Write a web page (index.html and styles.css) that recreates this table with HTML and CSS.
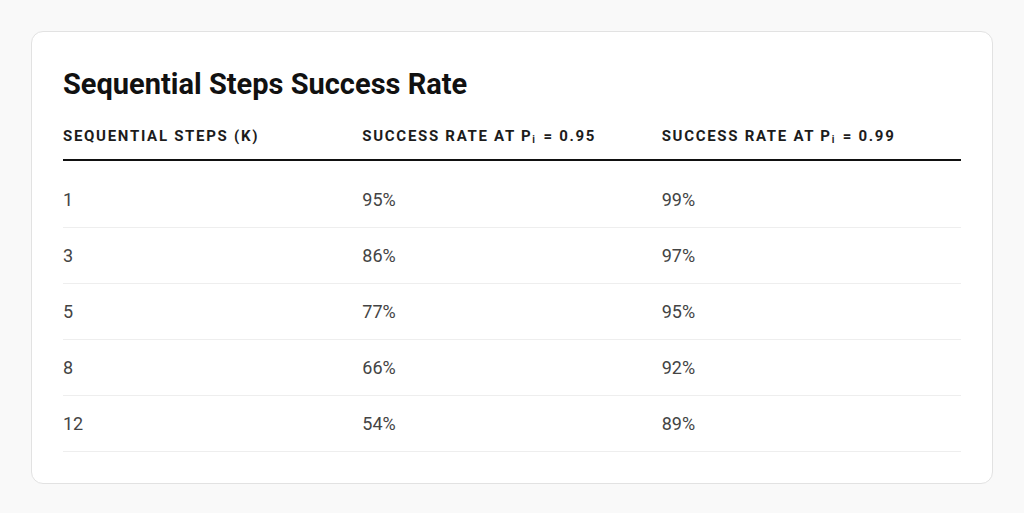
FILE: index.html
```html
<!DOCTYPE html>
<html lang="en">
<head>
<meta charset="utf-8">
<title>Sequential Steps Success Rate</title>
<link rel="stylesheet" href="styles.css">
</head>
<body>
<div class="page">
  <section class="card">
    <h1 class="title">Sequential Steps Success Rate</h1>
    <table class="data">
      <thead>
        <tr>
          <th>Sequential Steps (k)</th>
          <th>Success Rate at P<sub>i</sub> = 0.95</th>
          <th>Success Rate at P<sub>i</sub> = 0.99</th>
        </tr>
      </thead>
      <tbody>
        <tr><td>1</td><td>95%</td><td>99%</td></tr>
        <tr><td>3</td><td>86%</td><td>97%</td></tr>
        <tr><td>5</td><td>77%</td><td>95%</td></tr>
        <tr><td>8</td><td>66%</td><td>92%</td></tr>
        <tr><td>12</td><td>54%</td><td>89%</td></tr>
      </tbody>
    </table>
  </section>
</div>
</body>
</html>
```

FILE: styles.css
```css
html, body {
  margin: 0;
  padding: 0;
  background: #f9f9f9;
  font-family: Roboto, "Liberation Sans", sans-serif;
}
.page {
  padding: 31px;
}
.card {
  background: #ffffff;
  border: 1px solid #e2e2e2;
  border-radius: 12px;
  padding: 31px;
}
.title {
  margin: 0 0 9px 0;
  font-size: 29px;
  line-height: 42px;
  font-weight: 700;
  color: #111111;
  letter-spacing: 0;
}
.data {
  width: 100%;
  border-collapse: collapse;
  table-layout: fixed;
}
.data th {
  text-align: left;
  padding: 12px 0;
  font-size: 15px;
  line-height: 21px;
  font-weight: 700;
  text-transform: uppercase;
  letter-spacing: 1.7px;
  color: #1c1c1c;
  border-bottom: 2px solid #111111;
}
.data th sub {
  font-size: 10px;
  letter-spacing: 0;
  vertical-align: -2px;
  line-height: 0;
  text-transform: none;
  margin-right: 3px;
}
.data td {
  padding: 14px 0;
  font-size: 18px;
  line-height: 27px;
  color: #444444;
  border-bottom: 1px solid #eeeeee;
}
.data tbody tr:first-child td {
  padding-top: 25px;
}
```
